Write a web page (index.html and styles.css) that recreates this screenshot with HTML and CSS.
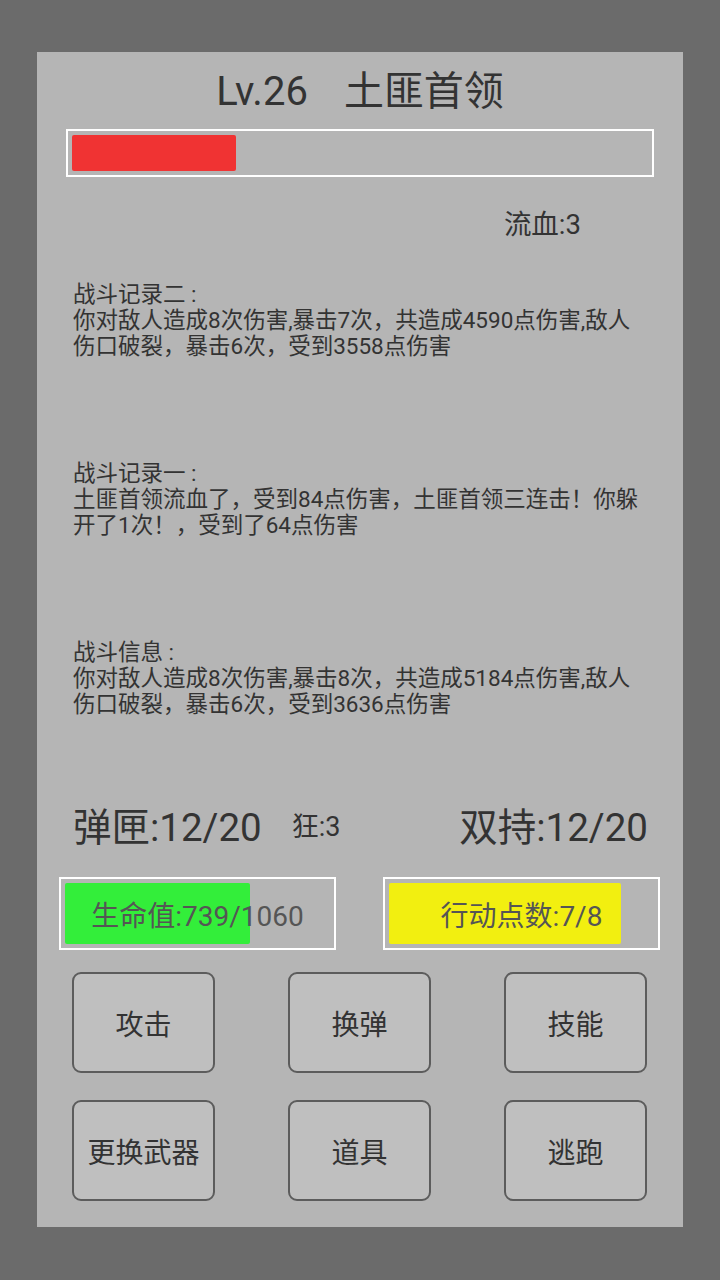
FILE: index.html
```html
<!doctype html>
<html>
<head>
  <meta charset="utf-8">
  <link rel="stylesheet" href="styles.css">
</head>
<body>
  <div class="panel">
    <h1 class="title">Lv.26<span class="bossName">土匪首领</span></h1>

    <div class="hpBar">
      <div class="hpFill" style="width:28.5%"></div>
    </div>

    <div class="status">流血:3</div>

    <div class="log">
      <p>战斗记录二 :</p>
      <p>你对敌人造成8次伤害,暴击7次，共造成4590点伤害,敌人伤口破裂，暴击6次，受到3558点伤害</p>
    </div>
    <div class="log">
      <p>战斗记录一 :</p>
      <p>土匪首领流血了，受到84点伤害，土匪首领三连击！你躲开了1次！，受到了64点伤害</p>
    </div>
    <div class="log">
      <p>战斗信息 :</p>
      <p>你对敌人造成8次伤害,暴击8次，共造成5184点伤害,敌人伤口破裂，暴击6次，受到3636点伤害</p>
    </div>

    <div class="ammoRow">
      <span class="ammo">弹匣:12/20</span>
      <span class="rage">狂:3</span>
      <span class="ammo dual">双持:12/20</span>
    </div>

    <div class="meters">
      <div class="meter">
        <div class="meterFill life" style="width:69.7%"></div>
        <div class="meterText">生命值:739/1060</div>
      </div>
      <div class="meter">
        <div class="meterFill action" style="width:87.5%"></div>
        <div class="meterText">行动点数:7/8</div>
      </div>
    </div>

    <div class="actions">
      <button class="btn">攻击</button>
      <button class="btn">换弹</button>
      <button class="btn">技能</button>
      <button class="btn">更换武器</button>
      <button class="btn">道具</button>
      <button class="btn">逃跑</button>
    </div>
  </div>
</body>
</html>
```

FILE: styles.css
```css
body{
  margin: 0;
  padding: 52px 37px 53px;
  background-color: #6b6b6b;
  font-family: Roboto, "Noto Sans CJK SC", sans-serif;
  color: #333333;
}
.panel{
  height: 1175px;
  box-sizing: border-box;
  background-color: #b5b5b5;
  padding-top: 16px;
}
.title{
  margin: 0;
  font-size: 40px;
  line-height: 48px;
  font-weight: normal;
  text-align: center;
  color: #333333;
}
.bossName{
  margin-left: 36px;
}
.hpBar{
  margin: 13px 29px 0;
  height: 48px;
  box-sizing: border-box;
  border: 2px solid #ffffff;
  padding: 4px;
}
.hpFill{
  height: 100%;
  background-color: #f03333;
  border-radius: 2px;
}
.status{
  margin-top: 30px;
  padding-right: 102px;
  text-align: right;
  font-size: 27.5px;
  line-height: 36px;
}
.log{
  margin: 38px 36px 0;
  font-size: 22.5px;
  line-height: 26px;
  height: 78px;
}
.log + .log{
  margin-top: 101px;
}
.log p{
  margin: 0;
}
.ammoRow{
  display: flex;
  align-items: center;
  margin-top: 83px;
  padding: 0 35px 0 36px;
  height: 48px;
}
.ammo{
  font-size: 38.5px;
}
.rage{
  font-size: 27px;
  margin-left: 30px;
}
.dual{
  margin-left: auto;
}
.meters{
  display: flex;
  justify-content: space-between;
  margin-top: 29px;
  padding: 0 23px 0 22px;
}
.meter{
  position: relative;
  width: 277px;
  height: 73px;
  box-sizing: border-box;
  border: 2px solid #ffffff;
  padding: 4px;
}
.meterFill{
  height: 100%;
  border-radius: 2px;
}
.life{
  background-color: #33ee3a;
}
.action{
  background-color: #f2ef10;
}
.meterText{
  position: absolute;
  left: 0;
  right: 0;
  top: 0;
  bottom: 0;
  display: flex;
  align-items: center;
  justify-content: center;
  font-size: 28px;
  color: #555555;
}
.actions{
  display: grid;
  grid-template-columns: repeat(3, 143px);
  grid-auto-rows: 101px;
  justify-content: space-between;
  row-gap: 27px;
  margin-top: 22px;
  padding: 0 36px 0 35px;
}
.btn{
  box-sizing: border-box;
  border: 2px solid #5c5c5c;
  border-radius: 9px;
  background-color: #bfbfbf;
  font-family: Roboto, "Noto Sans CJK SC", sans-serif;
  font-size: 28px;
  color: #333333;
  padding: 0;
}
```
